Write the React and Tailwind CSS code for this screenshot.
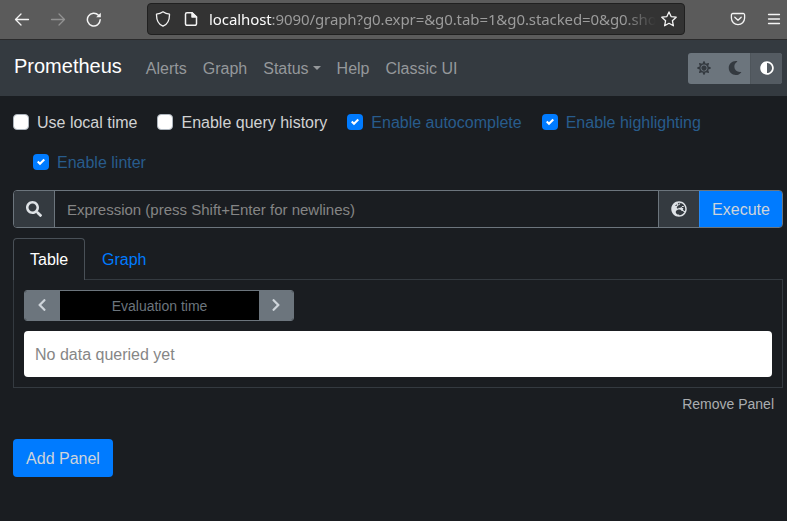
import React from "react";
import {
  FaSearch,
  FaChevronLeft,
  FaChevronRight,
  FaGlobeEurope,
  FaSun,
  FaMoon,
  FaAdjust,
} from "react-icons/fa";

const line = {
  fill: "none",
  stroke: "currentColor",
  strokeWidth: 1.3,
  strokeLinecap: "round",
  strokeLinejoin: "round",
};

function BrowserBar() {
  return (
    <div className="flex h-10 items-start border-b border-[#2a2a2b] bg-[#5b5b5b] pt-[3px] text-[#f4f4f4]">
      <div className="flex h-8 w-[147px] shrink-0 items-center pl-[14px]">
        <svg width="16" height="16" viewBox="0 0 16 16" {...line}>
          <path d="M14.5 8.5H1.5M7 3 1.5 8.5 7 14" />
        </svg>
        <svg className="ml-5 text-[#929292]" width="16" height="16" viewBox="0 0 16 16" {...line}>
          <path d="M1.5 8.5h13M9 3l5.500 5.500L9 14" />
        </svg>
        <svg className="ml-5" width="16" height="16" viewBox="0 0 16 16" {...line} strokeWidth="1.5">
          <path d="M14.200 8.800A6.400 6.400 0 1 1 12.500 4.200" />
          <path d="M14.800 1.700v4.600h-4.600z" fill="currentColor" stroke="none" />
        </svg>
      </div>
      <div className="flex h-8 w-[538px] shrink-0 items-center rounded-[4px] border border-[#202020] bg-[#333333] pl-[7px]">
        <svg width="16" height="16" viewBox="0 0 16 16" {...line}>
          <path d="M8 .8c2 1.500 4 2.200 6.500 2.400C14.600 8.500 13.200 13 8 15.200 2.800 13 1.400 8.500 1.500 3.200 4 3 6 2.300 8 .8z" />
        </svg>
        <svg className="ml-3" width="16" height="16" viewBox="0 0 16 16" {...line} strokeWidth="1.500">
          <path d="M9 1.700H4A1.500 1.500 0 0 0 2.500 3.200v9.600A1.500 1.500 0 0 0 4 14.300h8a1.500 1.500 0 0 0 1.500-1.500V6z" />
          <path d="M9 1.700V6h4.500z" fill="currentColor" />
        </svg>
        <div className="ml-[10px] w-[447px] overflow-hidden whitespace-nowrap font-['Noto_Sans',sans-serif] text-[15px] leading-5 tracking-[-0.09px] text-[#9c9c9c] [mask-image:linear-gradient(to_right,black_415px,transparent_447px)]">
          <span className="text-[#fbfbfb]">localhost</span>:9090/graph?g0.expr=&amp;g0.tab=1&amp;g0.stacked=0&amp;g0.sho
        </div>
        <svg className="ml-[5px]" width="16" height="16" viewBox="0 0 16 16" {...line}>
          <path d="m8 .9 2.100 4.700 5.100.6-3.800 3.500 1 5.100L8 12.300l-4.400 2.500 1-5.100L.8 6.200l5.100-.6z" />
        </svg>
      </div>
      <div className="flex h-8 items-center pl-[45px]">
        <svg width="16" height="16" viewBox="0 0 16 16" {...line}>
          <path d="M2.800 2.500h10.400a1.400 1.400 0 0 1 1.400 1.400v3.200a6.600 6.600 0 0 1-13.200 0V3.900a1.400 1.400 0 0 1 1.400-1.400z" />
          <path d="m4.800 6.200 3.200 3 3.200-3" />
        </svg>
        <svg className="ml-5" width="16" height="16" viewBox="0 0 16 16" {...line}>
          <path d="M2.500 3.500h11M2.500 8h11M2.500 12.500h11" />
        </svg>
      </div>
    </div>
  );
}

function Navbar() {
  return (
    <nav className="flex h-14 items-center bg-[#343a40] pl-[14px] pr-[5px] text-[#95989b]">
      <span className="mb-1 text-[20px] leading-[30px] text-white">Prometheus</span>
      <div className="ml-6 mt-px flex gap-4">
        <span>Alerts</span>
        <span>Graph</span>
        <span className="flex">
          Status
          <span className="ml-1 mt-[9px] h-0 border-x-[4.800px] border-t-[4.800px] border-x-transparent border-t-current" />
        </span>
        <span>Help</span>
        <span>Classic UI</span>
      </div>
      <div className="ml-auto flex h-[31px] overflow-hidden rounded-[3px] bg-[#6c757d] text-[14px] text-[#343a40]">
        <span className="flex w-[31px] items-center justify-center"><FaSun /></span>
        <span className="flex w-[31px] items-center justify-center"><FaMoon /></span>
        <span className="flex w-8 items-center justify-center border-l border-[#4e555b] bg-[#545b62] text-white"><FaAdjust /></span>
      </div>
    </nav>
  );
}

function Check({ label, checked }) {
  return (
    <label className="flex h-6 items-center">
      <span
        className={
          checked
            ? "flex size-4 items-center justify-center rounded-[4px] bg-[#007bff]"
            : "size-4 rounded-[4px] border border-[#adb5bd] bg-white"
        }
      >
        {checked && (
          <svg width="8" height="8" viewBox="0 0 8 8">
            <path fill="#fff" d="M6.564.75l-3.590 3.612-1.538-1.550L0 4.260 2.974 7.250 8 2.193z" />
          </svg>
        )}
      </span>
      <span className={checked ? "ml-2 pt-0.5 text-[#285c8c]" : "ml-2 pt-0.5 text-[#d1d2d3]"}>{label}</span>
    </label>
  );
}

export default function App() {
  return (
    <div className="h-[521px] w-[787px] overflow-hidden bg-[#1a1d21] font-['Liberation_Sans',sans-serif] text-[16px] leading-6">
      <BrowserBar />
      <Navbar />
      <main className="pl-[13px] pr-1 pt-[14px]">
        <div className="flex gap-x-5">
          <Check label="Use local time" />
          <Check label="Enable query history" />
          <Check label="Enable autocomplete" checked />
          <Check label="Enable highlighting" checked />
        </div>
        <div className="ml-5 mt-4">
          <Check label="Enable linter" checked />
        </div>

        <div className="mt-4 flex h-[38px] overflow-hidden rounded-[4px] border border-[#6c757d]">
          <span className="flex w-[41px] items-center justify-center border-r border-[#6c757d] bg-[#343a40] text-[#dee2e6]">
            <FaSearch />
          </span>
          <span className="flex flex-1 items-center pl-3 pt-0.5 text-[15px] text-[#858585]">
            Expression (press Shift+Enter for newlines)
          </span>
          <span className="flex w-[41px] items-center justify-center border-l border-[#6c757d] bg-[#343a40] text-[#dee2e6]">
            <FaGlobeEurope />
          </span>
          <button className="-my-px -mr-px w-[84px] rounded-r-[4px] border border-[#2389f7] bg-[#007bff] pt-0.5 text-[#ced4da]">
            Execute
          </button>
        </div>

        <div className="mt-[10px] flex h-[42px]">
          <span className="z-10 w-[72px] rounded-t-[4px] border border-b-0 border-[#495057] bg-[#1a1d21] pl-4 pt-[9px] text-white">
            Table
          </span>
          <span className="pl-[17px] pt-[10px] text-[#007bff]">Graph</span>
        </div>
        <div className="-mt-px h-[109px] border border-[#343a40] p-[10px]">
          <div className="flex h-[31px] w-[270px] overflow-hidden rounded-[3px] border border-[#6c757d] text-[14px] text-[#ced4da]">
            <span className="flex w-[35px] items-center justify-center bg-[#6c757d] pb-px pr-0.5"><FaChevronLeft /></span>
            <span className="flex flex-1 items-center justify-center bg-black text-[#6c757d]">Evaluation time</span>
            <span className="flex w-[34px] items-center justify-center bg-[#6c757d] pb-px"><FaChevronRight /></span>
          </div>
          <div className="mt-[10px] flex h-[46px] items-center rounded-[4px] bg-white pl-[11px] pt-0.5 text-[#868686]">
            No data queried yet
          </div>
        </div>
        <div className="mt-[6px] pr-[9px] text-right text-[14px] leading-[21px] text-[#aaadb0]">Remove Panel</div>
        <button className="mt-6 h-[38px] w-[100px] rounded-[4px] bg-[#007bff] pt-0.5 text-[#ced4da]">Add Panel</button>
      </main>
    </div>
  );
}
